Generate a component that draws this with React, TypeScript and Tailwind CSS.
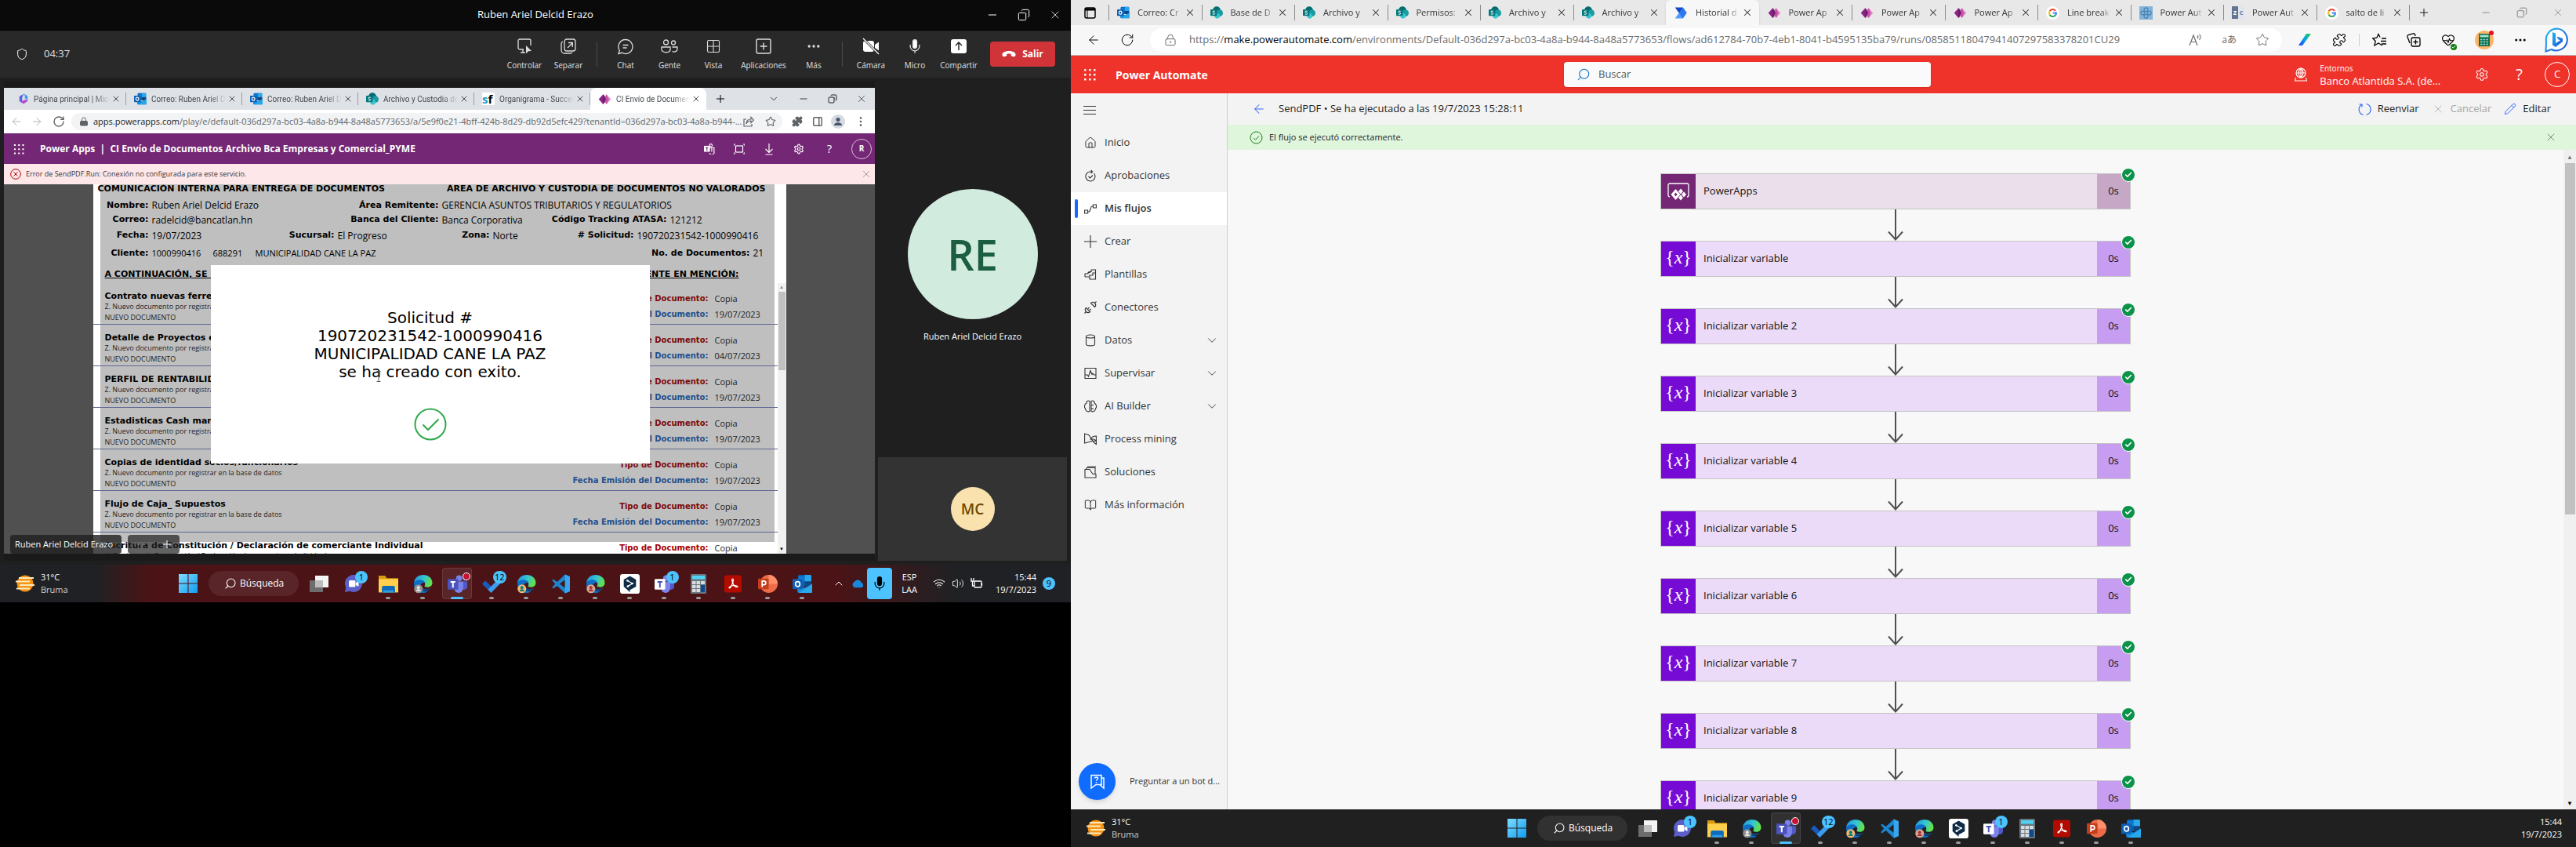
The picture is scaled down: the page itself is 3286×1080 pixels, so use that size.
import React from "react";
import {
  ArrowLeft, ArrowRight, BookOpen, Check, ChevronDown, ChevronUp, Download, Grid2x2, HeartPulse, House,
  LockKeyhole, Lock, Mic, Minus, MoreHorizontal, MoreVertical, PanelRight, Pencil, Plus, Puzzle,
  RotateCw, Search, Settings, Shield, SquarePlus, Star, Volume2, Wifi, X, Copy,
} from "lucide-react";

const ui = "font-['Open_Sans','Noto_Sans',sans-serif]";
const doc = "font-['DejaVu_Sans','Open_Sans',sans-serif]";
const fade = "[mask-image:linear-gradient(to_right,black_78%,transparent)]";

/* ---------- drawn icons ---------- */

function Waffle({ className = "" }: { className?: string }) {
  return (
    <svg className={className} viewBox="0 0 16 16" width="16" height="16" fill="currentColor">
      {[1, 7, 13].map((y) => [1, 7, 13].map((x) => <rect key={`${x}-${y}`} x={x} y={y} width="2.5" height="2.5" rx="0.6" />))}
    </svg>
  );
}

function OutlookIcon({ size = 16 }: { size?: number }) {
  return (
    <svg width={size} height={size} viewBox="0 0 24 24" className="shrink-0">
      <rect x="7" y="1" width="16" height="14" rx="1.5" fill="#0364b8" />
      <path d="M7 2.5h8V9H7z" fill="#0f78d4" />
      <path d="M15 1h6.500a1.500 1.500 0 0 1 1.500 1.500V9h-8z" fill="#28a8ea" />
      <path d="M15 9h8v6h-8z" fill="#14447d" />
      <path d="M6 12l9 5 9-5v9.500a1.500 1.500 0 0 1-1.500 1.500H8a2 2 0 0 1-2-2z" fill="#1490df" />
      <path d="M24 12v9.500a1.500 1.500 0 0 1-1.500 1.500H8z" fill="#28a8ea" />
      <rect x="0" y="6" width="12.500" height="12.500" rx="1.200" fill="#0f5fb4" />
      <ellipse cx="6.250" cy="12.250" rx="2.700" ry="3" fill="none" stroke="#fff" strokeWidth="1.700" />
    </svg>
  );
}

function SharePointIcon() {
  return (
    <svg width="16" height="16" viewBox="0 0 24 24" className="shrink-0">
      <circle cx="12" cy="8" r="7.500" fill="#036c70" />
      <circle cx="17.500" cy="13" r="6.500" fill="#1a9ba1" />
      <circle cx="13" cy="18.500" r="5" fill="#37c6d0" />
      <rect x="0" y="6" width="12.500" height="12.500" rx="1.200" fill="#03787c" />
      <path d="M8.600 9.600c-1.200-.8-4.200-.8-4.200 1 0 2 4.200 1.300 4.200 3.300 0 1.900-3 1.900-4.500.9" fill="none" stroke="#fff" strokeWidth="1.500" />
    </svg>
  );
}

function PowerAppsIcon() {
  return (
    <svg width="17" height="17" viewBox="0 0 24 24" className="shrink-0">
      <path d="M9 3l8 9-8 9-8-9z" fill="#8a2387" />
      <path d="M15 3l8 9-8 9-6-9z" fill="#e08bc6" />
      <path d="M15 3l4 9-4 9-4.500-9z" fill="#c653a8" />
      <path d="M9 3l5 9-5 9z" fill="#6a1a68" />
    </svg>
  );
}

function FlowIcon() {
  return (
    <svg width="17" height="17" viewBox="0 0 24 24" className="shrink-0">
      <path d="M1 2h14l7 10H8z" fill="#1447c9" />
      <path d="M8 12h14l-7 10H1z" fill="#4f9cf9" />
      <path d="M8 12L15 2l7 10-7 10z" fill="#2f78ee" />
    </svg>
  );
}

function GoogleIcon() {
  return (
    <svg width="17" height="17" viewBox="0 0 24 24" className="shrink-0">
      <circle cx="12" cy="12" r="12" fill="#fff" />
      <g fill="none" strokeWidth="3">
        <path d="M17 8.200A6.300 6.300 0 0 0 6.500 8.900" stroke="#ea4335" />
        <path d="M6.500 8.900a6.300 6.300 0 0 0 0 6.200" stroke="#fbbc05" />
        <path d="M6.500 15.100a6.300 6.300 0 0 0 9.900 1.500" stroke="#34a853" />
        <path d="M16.400 16.600a6.300 6.300 0 0 0 1.900-4.600h-6" stroke="#4285f4" />
      </g>
    </svg>
  );
}

function MicrosoftIcon() {
  return (
    <svg width="14" height="16" viewBox="0 0 24 24" className="shrink-0">
      <path d="M13 1L3 7v10l6 4V9z" fill="#5b5fe0" />
      <path d="M13 1l8 5v8l-6-3V6z" fill="#3aa0e8" />
      <path d="M21 14v3l-9 6-6-4 8-5z" fill="#b04fd0" />
    </svg>
  );
}

function SfIcon() {
  return (
    <span className="flex h-4 w-4 shrink-0 items-center bg-white font-['Open_Sans',sans-serif] text-[15px] leading-4 font-bold">
      <span className="text-[#1a9bd7]">s</span>
      <span className="text-black">f</span>
    </span>
  );
}

function RingsIcon() {
  return (
    <svg width="17" height="17" viewBox="0 0 16 16" className="shrink-0">
      <rect width="16" height="16" fill="#86b4d8" />
      <g fill="none" stroke="#4a86b8" strokeWidth="1.200">
        <circle cx="8" cy="4" r="2.300" /><circle cx="8" cy="12" r="2.300" /><circle cx="4" cy="8" r="2.300" /><circle cx="12" cy="8" r="2.300" />
      </g>
    </svg>
  );
}

function ZcIcon() {
  return (
    <span className="flex h-4 w-4 shrink-0 text-[9px] leading-4 font-bold">
      <span className="w-2 bg-[#5f7592] text-center text-white">z</span>
      <span className="w-2 bg-[#dfe6ee] text-center text-[#6d86a5]">c</span>
    </span>
  );
}

const tabIcons = {
  outlook: <OutlookIcon />, sp: <SharePointIcon />, pa: <PowerAppsIcon />, flow: <FlowIcon />, g: <GoogleIcon />,
  ms: <MicrosoftIcon />, sf: <SfIcon />, rings: <RingsIcon />, zc: <ZcIcon />,
};
type TabIcon = keyof typeof tabIcons;

function GlyphX({ className = "h-4 w-4" }: { className?: string }) {
  return <X className={className} strokeWidth={1.2} />;
}

/* ---------- taskbar ---------- */

function Edge({ accent, mark }: { accent: string; mark: string }) {
  return (
    <svg width="25" height="25" viewBox="0 0 24 24">
      <defs>
        <linearGradient id="edgeTop" x1="0" x2="1" y1="0" y2="0.300">
          <stop offset="0" stopColor="#1f8fe0" /><stop offset="0.600" stopColor="#35c8d0" /><stop offset="1" stopColor="#62e04c" />
        </linearGradient>
      </defs>
      <path d="M1 11C1.500 4.500 6.500 1 12 1c7 0 11.500 4.500 11.500 9.500 0 3.500-2.500 5.500-6 5.500-2.500 0-4-.8-3.500-1.700C16 11.500 13.500 8 9.500 8 5 8 1.500 9.500 1 11z" fill="url(#edgeTop)" />
      <path d="M1 11c.5-2.500 4-4 7.500-4 4 0 6 2.500 6 4-3-1.500-6 1-5.500 4.500.5 4 5 6.500 9 5.500C11 26 .5 22 1 11z" fill="#0f6fc8" />
      <path d="M9 15c0 4 4 6.500 8 5.500 2-.5 4-1.800 5-3.500-5 2.500-10 1-13-2z" fill="#0b4a86" />
      <circle cx="6.500" cy="18" r="5.300" fill={accent} />
      <circle cx="6.500" cy="16.500" r="1.900" fill={mark} />
      <path d="M3.500 21c.5-3.500 5.500-3.500 6 0z" fill={mark} />
    </svg>
  );
}

function TeamsIcon({ boxed }: { boxed?: boolean }) {
  return (
    <svg width="25" height="25" viewBox="0 0 24 24">
      <circle cx="14" cy="5" r="3.600" fill="#7b83eb" />
      <circle cx="20.500" cy="6" r="2.300" fill="#5059c9" />
      <path d="M17 9h7v6.500a4 4 0 0 1-6 3z" fill="#5059c9" />
      <path d="M8 9h11v8.500a5.500 5.500 0 0 1-11 0z" fill="#7b83eb" />
      <rect x="0" y="6" width="13" height="13" rx="1.200" fill={boxed ? "#ffffff" : "#4b53bc"} />
      <path d="M3.500 9.500h6M6.500 9.500v7" stroke={boxed ? "#4b53bc" : "#fff"} strokeWidth="1.900" />
    </svg>
  );
}

function Badge({ children }: { children: string }) {
  return (
    <span className="absolute -top-1 -right-1.5 flex h-4 min-w-4 items-center justify-center rounded-full bg-[#4cc2ff] px-0.5 text-[11px] leading-4 text-black">
      {children}
    </span>
  );
}

const apps: { name: string; icon: React.ReactNode; dot?: boolean; active?: boolean }[] = [
  {
    name: "Vista de tareas",
    icon: (
      <svg width="24" height="24" viewBox="0 0 24 24">
        <rect x="7" y="2" width="17" height="15" fill="#f4f4f4" /><rect x="0" y="8" width="17" height="15" fill="#6d6d6d" /><rect x="7" y="8" width="10" height="9" fill="#bdbdbd" />
      </svg>
    ),
  },
  {
    name: "Chat",
    icon: (
      <>
        <svg width="24" height="24" viewBox="0 0 24 24">
          <path d="M12 1a11 11 0 1 1-5 20.800L1 23l1.200-6A11 11 0 0 1 12 1z" fill="#5b5fc7" /><rect x="6" y="8" width="8.500" height="8.500" rx="1.500" fill="#fff" /><path d="M15 11l3.500-2v7L15 14z" fill="#fff" />
        </svg>
        <Badge>1</Badge>
      </>
    ),
  },
  {
    name: "Explorador de archivos",
    dot: true,
    icon: (
      <svg width="25" height="25" viewBox="0 0 24 24">
        <path d="M0 2h8l2 3h14v17H0z" fill="#d89a10" /><path d="M0 6h24v16.500H0z" fill="#ffd04c" /><path d="M4 16.500a2 2 0 0 1 2-2h12a2 2 0 0 1 2 2v6H4z" fill="#0f6cbd" /><path d="M6 20h12v2.500H6z" fill="#2fa1ea" />
      </svg>
    ),
  },
  { name: "Edge", dot: true, icon: <Edge accent="#8f8f8f" mark="#e5e5e5" /> },
  {
    name: "Teams",
    dot: true,
    active: true,
    icon: (
      <>
        <TeamsIcon />
        <span className="absolute -top-0.5 -right-1 h-2.5 w-2.5 rounded-full border border-white bg-[#c4122f]" />
      </>
    ),
  },
  {
    name: "To Do",
    dot: true,
    icon: (
      <>
        <svg width="25" height="25" viewBox="0 0 24 24">
          <path d="M0 12l4-4 7 7-4 4z" fill="#185abd" /><path d="M7 19L21 5l3.500 4L11 23z" fill="#3b9cf0" />
        </svg>
        <Badge>12</Badge>
      </>
    ),
  },
  { name: "Edge Finanzas", dot: true, icon: <Edge accent="#f0b878" mark="#0d7a6a" /> },
  {
    name: "Visual Studio Code",
    dot: true,
    icon: (
      <svg width="25" height="25" viewBox="0 0 24 24">
        <path fillRule="evenodd" d="M17 .5l6 2.500v18l-6 2.500-9.500-9L3 17.500l-2-1L5 12 1 7.500l2-1L7.500 9.500zM17 7l-6.500 5 6.500 5z" fill="#1a86cf" />
        <path d="M17 .5l6 2.500v18l-6 2.500z" fill="#3aa5ee" />
      </svg>
    ),
  },
  { name: "Edge Personal", dot: true, icon: <Edge accent="#d8a888" mark="#a8324a" /> },
  {
    name: "DeepL",
    dot: true,
    icon: (
      <svg width="25" height="25" viewBox="0 0 24 24">
        <rect width="24" height="24" rx="3" fill="#fff" /><path d="M12 2.500l7.500 4.200v8.600L12 19.500v2.500L4.500 15.300V6.700z" fill="#0f2b46" /><path d="M9 8l6 3.500L9.500 15" stroke="#fff" strokeWidth="1.200" fill="none" /><circle cx="9" cy="8" r="1.300" fill="#fff" /><circle cx="15" cy="11.500" r="1.300" fill="#fff" /><circle cx="9.500" cy="15" r="1.300" fill="#fff" />
      </svg>
    ),
  },
  {
    name: "Teams personal",
    dot: true,
    icon: (
      <>
        <TeamsIcon boxed />
        <Badge>1</Badge>
      </>
    ),
  },
  {
    name: "Calculadora",
    dot: true,
    icon: (
      <svg width="20" height="25" viewBox="0 0 20 25">
        <rect width="20" height="25" rx="1.500" fill="#6a7680" /><rect x="2" y="2" width="16" height="4.500" fill="#4fd3f5" />
        {[9, 14, 19].map((y) => [2, 7.5].map((x) => <rect key={`${x}-${y}`} x={x} y={y} width="4.500" height="4" fill="#d9dde0" />))}
        <rect x="13" y="9" width="5" height="4" fill="#d9dde0" /><rect x="13" y="14" width="5" height="9" fill="#0b4a8f" />
      </svg>
    ),
  },
  {
    name: "Acrobat",
    dot: true,
    icon: (
      <svg width="22" height="23" viewBox="0 0 24 24">
        <rect width="24" height="24" rx="3.500" fill="#b30b00" />
        <path d="M11.500 5c-1.500 0-.8 3.500.5 6.500s4 5 5.500 5 1.500-2-2.500-2.300c-3-.2-6 .6-7.500 1.800s-1 2.500.3 1.700C9.500 16.500 12.500 9 12.500 6.500c0-1-.5-1.500-1-1.500z" fill="none" stroke="#fff" strokeWidth="1.400" />
      </svg>
    ),
  },
  {
    name: "PowerPoint",
    dot: true,
    icon: (
      <svg width="25" height="25" viewBox="0 0 24 24">
        <circle cx="13" cy="12" r="11" fill="#ed6c47" /><path d="M13 1a11 11 0 0 1 11 11H13z" fill="#ff8f6b" /><rect x="0" y="5.500" width="13" height="13" rx="1.200" fill="#c43e1c" /><path d="M5 16V8.500h2.200a2.200 2.200 0 0 1 0 4.500H5" fill="none" stroke="#fff" strokeWidth="1.600" />
      </svg>
    ),
  },
  { name: "Outlook", dot: true, icon: <OutlookIcon size={25} /> },
];

function TaskApps() {
  return (
    <div className="flex items-center">
      <button aria-label="Inicio" className="mr-1.5 flex h-10 w-10 items-center justify-center">
        <svg width="24" height="24" viewBox="0 0 23 23">
          <defs><linearGradient id="win" x1="0" y1="0" x2="1" y2="1"><stop offset="0" stopColor="#7fdcff" /><stop offset="1" stopColor="#0f9bf0" /></linearGradient></defs>
          <path d="M0 0h11v11H0zM12 0h11v11H12zM0 12h11v11H0zM12 12h11v11H12z" fill="url(#win)" />
        </svg>
      </button>
      <button className="mr-1 flex h-8 w-[115px] items-center gap-1 rounded-full bg-white/8 pl-5 text-[12px] text-white">
        <Search className="h-4 w-4 -scale-x-100" strokeWidth={1.6} />
        Búsqueda
      </button>
      {apps.map((a) => (
        <button key={a.name} aria-label={a.name} className="relative flex h-10 w-11 items-center justify-center">
          <span className={`relative flex h-10 w-[38px] items-center justify-center ${a.active ? "rounded border border-white/10 bg-white/8" : ""}`}>
            <span className="relative">{a.icon}</span>
          </span>
          {a.dot && <span className={`absolute bottom-0 h-[3px] rounded-full ${a.active ? "w-4 bg-[#4cc2ff]" : "w-1.5 bg-[#9b9b9b]"}`} />}
        </button>
      ))}
    </div>
  );
}

function Weather() {
  return (
    <div className="flex w-[200px] items-center gap-2 pl-5 text-[11px] leading-4 text-white">
      <svg width="24" height="24" viewBox="0 0 24 24">
        <circle cx="12" cy="12" r="10.500" fill="#f59410" />
        <path d="M4 5h19M0 9.500h18M5 14h19M1 18.500h17" stroke="#fde9c0" strokeWidth="1.800" />
      </svg>
      <div>
        <div>31°C</div>
        <div className="text-[#cfcfcf]">Bruma</div>
      </div>
    </div>
  );
}

/* ---------- Teams window ---------- */

function MeetButton({ icon, label, w }: { icon: React.ReactNode; label: string; w: string }) {
  return (
    <button className={`flex flex-col items-center gap-1 text-[10px] leading-4 text-[#e0e0e0] ${w}`}>
      <span className="flex h-6 items-center">{icon}</span>
      {label}
    </button>
  );
}

function TeamsWindowBar() {
  return (
    <>
      <header className="grid h-[39px] grid-cols-3 items-center border-b border-black bg-[#0a0a0a] text-[13px] text-white">
        <span />
        <h1 className="text-center">Ruben Ariel Delcid Erazo</h1>
        <div className="flex justify-end gap-6 pr-3">
          <button aria-label="Minimizar"><Minus className="h-4 w-4" strokeWidth={1.5} /></button>
          <button aria-label="Restaurar"><Copy className="h-4 w-4 rotate-90" strokeWidth={1.5} /></button>
          <button aria-label="Cerrar"><GlyphX /></button>
        </div>
      </header>
      <div className="flex h-[60px] items-center bg-[#292929] text-white">
        <Shield className="mr-5 ml-5 h-4 w-4" strokeWidth={1.5} />
        <span className="text-[13px] text-[#e0e0e0]">04:37</span>
        <div className="ml-auto flex items-center pr-5">
          <MeetButton w="w-14" label="Controlar" icon={
            <svg width="20" height="22" viewBox="0 0 20 22" fill="none" stroke="#ddd" strokeWidth="1.300"><path d="M9 15H4a2 2 0 0 1-2-2V4a2 2 0 0 1 2-2h12a2 2 0 0 1 2 2v6M5 19h6M8 15v4" /><path d="M12 10l7 7-4 .3-3 3z" fill="#ddd" stroke="none" /></svg>
          } />
          <MeetButton w="w-14" label="Separar" icon={
            <svg width="20" height="20" viewBox="0 0 20 20" fill="none" stroke="#ddd" strokeWidth="1.300"><rect x="5" y="1" width="14" height="15" rx="3" /><path d="M3 4a3 3 0 0 0-2 3v8a4 4 0 0 0 4 4h7a3 3 0 0 0 3-1.500M9 12l6-6M10 5.500h5.300V11" /></svg>
          } />
          <span className="mx-2 h-8 w-px bg-[#4a4a4a]" />
          <MeetButton w="w-14" label="Chat" icon={
            <svg width="20" height="21" viewBox="0 0 20 21" fill="none" stroke="#ddd" strokeWidth="1.300"><path d="M10 1.500a9 9 0 1 1-4.500 16.800L1 19.500l1.300-4.200A9 9 0 0 1 10 1.500zM6.500 8.500h7M6.500 12h5" /></svg>
          } />
          <MeetButton w="w-14" label="Gente" icon={
            <svg width="22" height="18" viewBox="0 0 22 18" fill="none" stroke="#ddd" strokeWidth="1.300"><circle cx="6.500" cy="4" r="3" /><circle cx="16" cy="4.500" r="2.500" /><path d="M1 10h11v3c0 5-11 5-11 0zM14.500 10H21v2.500c0 3-3.500 4.300-6.500 3" /></svg>
          } />
          <MeetButton w="w-14" label="Vista" icon={<Grid2x2 className="h-5 w-5 text-[#ddd]" strokeWidth={1.3} />} />
          <MeetButton w="w-[72px]" label="Aplicaciones" icon={<SquarePlus className="h-6 w-6 text-[#ddd]" strokeWidth={1.4} />} />
          <MeetButton w="w-14" label="Más" icon={<MoreHorizontal className="h-5 w-5" />} />
          <span className="mx-2 h-8 w-px bg-[#4a4a4a]" />
          <MeetButton w="w-14" label="Cámara" icon={
            <svg width="22" height="22" viewBox="0 0 22 22"><rect x="1" y="4" width="14" height="14" rx="3" fill="#fff" /><path d="M16 9l5-3.500v11L16 13z" fill="#fff" /><path d="M1 1l20 20" stroke="#292929" strokeWidth="3" /><path d="M1 1l20 20" stroke="#fff" strokeWidth="1.300" /></svg>
          } />
          <MeetButton w="w-14" label="Micro" icon={<Mic className="h-5 w-5 [&_rect]:fill-white" strokeWidth={1.5} />} />
          <MeetButton w="w-14" label="Compartir" icon={
            <svg width="20" height="18" viewBox="0 0 20 18"><rect width="20" height="18" rx="3" fill="#fff" /><path d="M10 14V4M6 8l4-4 4 4" stroke="#292929" strokeWidth="1.500" fill="none" /></svg>
          } />
          <button className="ml-3 flex h-8 w-[83px] items-center justify-center gap-2 rounded bg-[#d13438] text-[12px] font-bold text-white">
            <svg width="18" height="8" viewBox="0 0 18 8" fill="#fff"><path d="M9 0c4 0 8.500 1.500 8.500 4.500 0 2-1 3-2.500 2.800l-2-.5c-1-.3-1.500-1-1.300-2.800-1.700-.6-3.700-.6-5.400 0 .2 1.800-.3 2.500-1.300 2.800l-2 .5C1.500 7.500.5 6.500.5 4.500.5 1.500 5 0 9 0z" /></svg>
            Salir
          </button>
        </div>
      </div>
    </>
  );
}

function ChromeTab({ icon, title, active }: { icon: TabIcon; title: string; active?: boolean }) {
  return (
    <div className={`flex h-7 w-[148px] items-center pl-2.5 font-['Roboto','Open_Sans',sans-serif] text-[10px] text-[#45494d] ${active ? "rounded-t-lg bg-white" : ""}`}>
      {tabIcons[icon]}
      <span className={`ml-1.5 flex-1 overflow-hidden whitespace-nowrap ${fade}`}>{title}</span>
      <button aria-label={`Cerrar ${title}`} className="ml-0.5"><X className="h-3 w-3" /></button>
      <span className={`ml-1.5 h-4 w-px ${active ? "" : "bg-[#9aa0a6]"}`} />
    </div>
  );
}

function ChromeBar() {
  return (
    <>
      <div className="flex h-7 items-center bg-[#dee1e6] pl-2">
        <ChromeTab icon="ms" title="Página principal | Micr" />
        <ChromeTab icon="outlook" title="Correo: Ruben Ariel D" />
        <ChromeTab icon="outlook" title="Correo: Ruben Ariel D" />
        <ChromeTab icon="sp" title="Archivo y Custodia de" />
        <ChromeTab icon="sf" title="Organigrama - Succes" />
        <ChromeTab icon="pa" title="CI Envío de Document" active />
        <button aria-label="Nueva pestaña" className="ml-2.5"><Plus className="h-4 w-4" strokeWidth={1.5} /></button>
        <div className="ml-auto flex items-center gap-6 pr-2.5 text-[#222]">
          <ChevronDown className="h-3.5 w-3.5" strokeWidth={1.5} />
          <Minus className="h-3.5 w-3.5" strokeWidth={1.5} />
          <Copy className="h-3 w-3 rotate-90" strokeWidth={2} />
          <GlyphX className="h-3.5 w-3.5" />
        </div>
      </div>
      <div className="flex h-[30px] items-center bg-white pr-2.5 pl-2 text-[#5f6368]">
        <ArrowLeft className="h-4 w-4 text-[#b0b3b6]" strokeWidth={1.5} />
        <ArrowRight className="ml-2.5 h-4 w-4 text-[#b0b3b6]" strokeWidth={1.5} />
        <RotateCw className="ml-3 h-4 w-4" />
        <div className="ml-2 flex h-[22px] min-w-0 flex-1 items-center rounded-full bg-[#f1f3f4] pr-2 pl-2.5">
          <Lock className="h-3 w-3 [&_rect]:fill-[#5f6368]" />
          <span className="ml-1.5 min-w-0 flex-1 overflow-hidden text-[11px] whitespace-nowrap">
            <span className="text-[#202124]">apps.powerapps.com</span>/play/e/default-036d297a-bc03-4a8a-b944-8a48a5773653/a/5e9f0e21-4bff-424b-8d29-db92d5efc429?tenantId=036d297a-bc03-4a8a-b944-...
          </span>
          <svg className="mr-3.5" width="14" height="14" viewBox="0 0 14 14" fill="none" stroke="#5f6368" strokeWidth="1.200"><path d="M4 4H1v9h10v-3M4 10c0-4 2-6 6-6V1.500L13.500 5 10 8.500V6C7 6 5 7.500 4 10z" /></svg>
          <Star className="h-3.5 w-3.5" strokeWidth={1.8} />
        </div>
        <Puzzle className="ml-3 h-3.5 w-3.5 fill-[#5f6368]" />
        <PanelRight className="ml-3 h-3.5 w-3.5" strokeWidth={2.5} />
        <span className="ml-2.5 flex h-[18px] w-[18px] items-center justify-center overflow-hidden rounded-full bg-[#d5d9e0]">
          <svg width="12" height="12" viewBox="0 0 12 12" fill="#44546a"><circle cx="6" cy="3.500" r="2.500" /><path d="M1 11c0-5 10-5 10 0z" /></svg>
        </span>
        <MoreVertical className="ml-3 h-4 w-4" />
      </div>
    </>
  );
}

function PowerAppsBar() {
  return (
    <>
      <div className="flex h-[39px] items-center bg-[#742774] pl-3 text-white">
        <Waffle className="h-3.5 w-3.5" />
        <span className="ml-5 text-[12px] font-bold">Power Apps&nbsp; |&nbsp; CI Envío de Documentos Archivo Bca Empresas y Comercial_PYME</span>
        <div className="ml-auto flex items-center gap-6 pr-1">
          <svg width="14" height="14" viewBox="0 0 24 24" fill="none" stroke="#fff" strokeWidth="2"><circle cx="15" cy="4" r="3" /><path d="M12 9h10v8a5 5 0 0 1-10 4M17 9v9" /><rect x="0" y="5" width="13" height="13" fill="#fff" stroke="none" /><path d="M3.500 9h6M6.500 9v7" stroke="#742774" /></svg>
          <svg width="14" height="14" viewBox="0 0 14 14" fill="none" stroke="#fff" strokeWidth="1.200"><rect x="2.500" y="3" width="9" height="8" /><path d="M0 3V1h2M12 1h2v2M14 11v2h-2M2 13H0v-2" /></svg>
          <svg width="14" height="16" viewBox="0 0 14 16" fill="none" stroke="#fff" strokeWidth="1.200"><path d="M7 1v11M2.500 8L7 12.500 11.500 8M2.500 15h9" /></svg>
          <Settings className="h-3.5 w-3.5" strokeWidth={2} />
          <span className="w-4 text-center text-[15px]">?</span>
          <span className="-ml-1 flex h-[26px] w-[26px] items-center justify-center rounded-full border border-white/70 text-[10px] font-bold">R</span>
        </div>
      </div>
      <div role="alert" className="flex h-[26px] items-center bg-[#fde7e9] pr-1 pl-2 text-[#3a3536]">
        <svg width="14" height="14" viewBox="0 0 14 14" fill="none" stroke="#a80000"><circle cx="7" cy="7" r="6.300" /><path d="M4.500 4.500l5 5M9.500 4.500l-5 5" /></svg>
        <span className="ml-1.5 text-[9px]">Error de SendPDF.Run: Conexión no configurada para este servicio.</span>
        <button aria-label="Cerrar aviso" className="ml-auto text-[#777]"><GlyphX className="h-3.5 w-3.5" /></button>
      </div>
    </>
  );
}

function Label({ children }: { children: string }) {
  return <dt className={`text-right text-[11px] font-bold whitespace-nowrap ${doc}`}>{children}</dt>;
}
function Value({ children, small }: { children: string; small?: boolean }) {
  return <dd className={`pl-1 whitespace-nowrap ${small ? "text-[11px]" : "text-[12px]"}`}>{children}</dd>;
}

const items = [
  ["Contrato nuevas ferreterias", "19/07/2023"],
  ["Detalle de Proyectos en ejecución", "04/07/2023"],
  ["PERFIL DE RENTABILIDAD", "19/07/2023"],
  ["Estadisticas Cash management", "19/07/2023"],
  ["Copias de identidad socios/funcionarios", "19/07/2023"],
  ["Flujo de Caja_ Supuestos", "19/07/2023"],
];

function ItemRow({ title, sub, date, last }: { title: string; sub: string; date: string; last?: boolean }) {
  return (
    <li className={`flex h-[53px] justify-between pl-[15px] ${last ? "" : "border-b border-[#5f6794]"}`}>
      <div className="pt-2.5 text-[9px] leading-3 text-[#222]">
        <div className={`text-[11px] leading-[14px] font-bold text-black ${doc}`}>{title}</div>
        <div>{sub}</div>
        <div className="mt-0.5">NUEVO DOCUMENTO</div>
      </div>
      <dl className="grid h-[53px] grid-cols-[1fr_88px] content-start gap-y-1 pt-3 leading-4">
        <dt className={`text-right text-[10px] font-bold ${doc} ${last ? "text-[#a80000]" : "text-[#7d0a0a]"}`}>Tipo de Documento:</dt>
        <dd className="pl-2 text-[11px] text-[#222]">Copia</dd>
        <dt className={`text-right text-[10px] font-bold text-[#22508c] ${doc}`}>Fecha Emisión del Documento:</dt>
        <dd className="pl-2 text-[11px] text-[#222]">{date}</dd>
      </dl>
    </li>
  );
}

function DocumentPage() {
  return (
    <div className="relative flex h-[471px] justify-center overflow-hidden bg-[#505050] text-black">
      <article className="relative w-[884px] bg-white">
        <div className="absolute top-0 right-[15px] left-[9px] h-[456px] bg-[#bfbfbf]" />
        <div className="relative">
          <div className={`flex h-[18px] justify-between pr-[26px] pl-1.5 text-[11px] leading-3 font-bold whitespace-nowrap ${doc}`}>
            <h2>COMUNICACIÓN INTERNA PARA ENTREGA DE DOCUMENTOS</h2>
            <h2>ÁREA DE ARCHIVO Y CUSTODIA DE DOCUMENTOS NO VALORADOS</h2>
          </div>
          <dl className="grid h-[18px] grid-cols-[71px_242px_128px_1fr] items-center">
            <Label>Nombre:</Label><Value>Ruben Ariel Delcid Erazo</Value>
            <Label>Área Remitente:</Label><Value>GERENCIA ASUNTOS TRIBUTARIOS Y REGULATORIOS</Value>
          </dl>
          <dl className="grid h-[19px] grid-cols-[71px_242px_128px_126px_165px_1fr] items-center">
            <Label>Correo:</Label><Value>radelcid@bancatlan.hn</Value>
            <Label>Banca del Cliente:</Label><Value>Banca Corporativa</Value>
            <Label>Código Tracking ATASA:</Label><Value>121212</Value>
          </dl>
          <dl className="grid h-[21px] grid-cols-[71px_165px_72px_148px_50px_90px_94px_1fr] items-center">
            <Label>Fecha:</Label><Value>19/07/2023</Value>
            <Label>Sucursal:</Label><Value>El Progreso</Value>
            <Label>Zona:</Label><Value>Norte</Value>
            <Label># Solicitud:</Label><Value>190720231542-1000990416</Value>
          </dl>
          <dl className="grid h-6 grid-cols-[71px_78px_54px_489px_146px_1fr] items-center">
            <Label>Cliente:</Label><Value small>1000990416</Value>
            <Value small>688291</Value><Value small>MUNICIPALIDAD CANE LA PAZ</Value>
            <Label>No. de Documentos:</Label><Value>21</Value>
          </dl>
          <div className={`flex h-[26px] items-center justify-between pt-1 pr-[60px] pl-[15px] text-[11px] font-bold underline ${doc}`}>
            <span>A CONTINUACIÓN, SE DETALLAN</span>
            <span>CORRESPONDIENTE EN MENCIÓN:</span>
          </div>
          <div className="flex">
            <ul className="min-w-0 flex-1">
              {items.map(([t, d]) => (
                <ItemRow key={t} title={t} sub="Z. Nuevo documento por registrar en la base de datos" date={d} />
              ))}
              <ItemRow title="Escritura de Constitución / Declaración de comerciante Individual" sub="A. Escritura de Constitución / Declaración de comerciante Individual" date="19/07/2023" last />
            </ul>
            <div className="flex h-[345px] w-[11px] flex-col items-center justify-between bg-[#f1f1f1] text-[6px]">
              <span className="flex flex-col items-center leading-[11px] text-[#888]">▲<span className="h-[100px] w-[9px] bg-[#c1c1c1]" /></span>
              <span className="leading-3">▼</span>
            </div>
          </div>
        </div>
      </article>
      <div role="dialog" aria-label="Solicitud creada" className="absolute top-[103px] left-1/2 -ml-3 flex h-[253px] w-[560px] -translate-x-1/2 flex-col items-center bg-white pt-14">
        <p className={`text-center text-[20px] leading-[23px] ${doc}`}>
          Solicitud #<br />190720231542-1000990416<br />MUNICIPALIDAD CANE LA PAZ<br />se ha creado con exito.
        </p>
        <svg className="mt-[34px]" width="42" height="42" viewBox="0 0 42 42" fill="none" stroke="#2fa84a" strokeWidth="2"><circle cx="21" cy="21" r="19.500" /><path d="M11.500 21.500l6.500 6.500L31.500 14.500" /></svg>
      </div>
      <svg className="absolute top-[238px] left-[474px]" width="8" height="14" viewBox="0 0 8 14" fill="none" stroke="#555"><path d="M1.500.5h5M4 .5v13M1.500 13.500h5" /></svg>
      <div className="absolute bottom-0 left-2 flex h-6 gap-2 text-white">
        <span className="flex w-[142px] items-center rounded bg-[#1f1f1f]/80 pl-1.5 text-[11px] whitespace-nowrap">Ruben Ariel Delcid Erazo</span>
        <span className="flex w-[66px] items-center justify-around rounded bg-[#1f1f1f]/70">
          <Minus className="h-4 w-4 text-[#888]" strokeWidth={1.5} /><Plus className="h-4 w-4" strokeWidth={1.5} />
        </span>
      </div>
    </div>
  );
}

function LeftScreen() {
  return (
    <section className="min-w-0 bg-black">
      <TeamsWindowBar />
      <main className="flex h-[621px] bg-[#1f1f1f] p-[5px]">
        <div className="flex min-w-0 flex-1 flex-col bg-[#1a1a1a] pt-2">
          <ChromeBar />
          <PowerAppsBar />
          <DocumentPage />
        </div>
        <aside className="flex w-[245px] flex-col pl-1">
          <div className="flex flex-1 flex-col items-center pt-[137px]">
            <div className="flex h-[166px] w-[166px] items-center justify-center rounded-full bg-[#d1ebdf] text-[54px] font-semibold text-[#1c5e40]">RE</div>
            <div className="mt-3.5 text-[11px] text-white">Ruben Ariel Delcid Erazo</div>
          </div>
          <div className="flex h-[132px] items-center justify-center bg-[#333333]">
            <div className="flex h-14 w-14 items-center justify-center rounded-full bg-[#f9e2ae] text-[19px] font-semibold text-[#6d4a06]">MC</div>
          </div>
        </aside>
      </main>
      <footer className="flex h-12 items-center bg-[linear-gradient(to_right,#202124_9%,#4c1316_14%,#4c1316_78%,#202124_89%)]">
        <div className="w-[220px]"><Weather /></div>
        <TaskApps />
        <div className="ml-auto flex items-center pr-5 text-white">
          <ChevronUp className="h-4 w-4" strokeWidth={1.5} />
          <svg className="ml-2 h-3.5 w-4" viewBox="0 0 18 14" fill="#1a86dd"><path d="M5 13a4.500 4.500 0 0 1-.5-8.500A5.500 5.500 0 0 1 14.500 6 3.600 3.600 0 0 1 14 13z" /></svg>
          <span className="ml-1 flex h-10 w-8 items-center justify-center rounded bg-[#4cc2ff] text-black"><Mic className="h-5 w-5 [&_rect]:fill-black" strokeWidth={1.5} /></span>
          <span className="ml-3 text-center text-[11px] leading-4">ESP<br />LAA</span>
          <Wifi className="ml-5 h-4 w-4" strokeWidth={1.6} />
          <Volume2 className="ml-2 h-4 w-4" strokeWidth={1.3} />
          <svg className="ml-2 h-4 w-4" viewBox="0 0 16 16" fill="none" stroke="#fff" strokeWidth="1.300"><rect x="5" y="5" width="9" height="8" rx="1" /><path d="M14.500 7.500v3M1 1v4h3V1M2.500 5v6H5" /></svg>
          <span className="ml-4 text-right text-[11px] leading-4">15:44<br />19/7/2023</span>
          <span className="ml-2 flex h-4 w-4 items-center justify-center rounded-full bg-[#4cc2ff] text-[11px] text-black">9</span>
        </div>
      </footer>
    </section>
  );
}

/* ---------- Power Automate window ---------- */

const edgeTabs: { icon: TabIcon; title: string; active?: boolean }[] = [
  { icon: "outlook", title: "Correo: Cr" }, { icon: "sp", title: "Base de D" }, { icon: "sp", title: "Archivo y" },
  { icon: "sp", title: "Permisos:" }, { icon: "sp", title: "Archivo y" }, { icon: "sp", title: "Archivo y" },
  { icon: "flow", title: "Historial d", active: true }, { icon: "pa", title: "Power Ap" }, { icon: "pa", title: "Power Ap" },
  { icon: "pa", title: "Power Ap" }, { icon: "g", title: "Line break" }, { icon: "rings", title: "Power Aut" },
  { icon: "zc", title: "Power Aut" }, { icon: "g", title: "salto de li" },
];

function EdgeBrowserBar() {
  return (
    <>
      <div className="flex h-8 items-center bg-[#e8e8e8]">
        <div className="flex w-12 justify-center"><svg width="15" height="15" viewBox="0 0 15 15" fill="none" stroke="#000"><rect x="1" y="1" width="13" height="13" rx="2" strokeWidth="1.500" /><path d="M1 3h13" strokeWidth="3" /><path d="M4 4v10" /></svg></div>
        <div className="grid h-full min-w-0 flex-1 grid-cols-14">
          {edgeTabs.map((t, i) => (
            <div key={i} className={`flex min-w-0 items-center ${t.active ? "rounded-t-md bg-[#f7f7f7] shadow" : ""}`}>
              <span className={`h-5 w-px ${t.active || i === 7 ? "" : "bg-[#8a8a8a]"}`} />
              <div className="flex min-w-0 flex-1 items-center pr-2 pl-2.5 text-[11px] text-[#333]">
                {tabIcons[t.icon]}
                <span className={`ml-2.5 min-w-0 flex-1 overflow-hidden whitespace-nowrap ${fade}`}>{t.title}</span>
                <button aria-label={`Cerrar ${t.title}`} className="ml-1"><X className="h-3.5 w-3.5" strokeWidth={1.8} /></button>
              </div>
            </div>
          ))}
        </div>
        <div className="flex w-[213px] items-center pr-4 text-[#777]">
          <span className="mr-2.5 h-5 w-px bg-[#8a8a8a]" />
          <Plus className="h-4 w-4 text-black" strokeWidth={1.3} />
          <Minus className="ml-auto h-3.5 w-3.5" strokeWidth={1.5} />
          <Copy className="ml-8 h-3.5 w-3.5 rotate-90" strokeWidth={1.5} />
          <GlyphX className="ml-8 h-3.5 w-3.5" />
        </div>
      </div>
      <div className="flex h-[39px] items-center border-b border-[#b8b8b8] bg-[#f7f7f7] pl-5 text-black">
        <ArrowLeft className="h-[18px] w-[18px]" strokeWidth={1.3} />
        <RotateCw className="ml-[25px] h-[18px] w-[18px]" strokeWidth={1.3} />
        <div className="ml-5 flex h-[30px] min-w-0 flex-1 items-center rounded-full bg-white pr-4 pl-[18px] text-[#6b6b6b]">
          <LockKeyhole className="h-4 w-4" strokeWidth={1.5} />
          <span className="ml-4 min-w-0 flex-1 truncate text-[13px]">
            https://<span className="text-black">make.powerautomate.com</span>/environments/Default-036d297a-bc03-4a8a-b944-8a48a5773653/flows/ad612784-70b7-4eb1-8041-b4595135ba79/runs/08585118047941407297583378201CU29
          </span>
          <svg width="18" height="16" viewBox="0 0 18 16" fill="none" stroke="#6b6b6b" strokeWidth="1.200"><path d="M1 15L6 2l5 13M2.700 10.500h6.600M11 2.500c1 1 1 2.500 0 3.500M13.500 .8c2 2 2 5 0 7" /></svg>
          <span className="ml-6 font-['Open_Sans','Noto_Sans_CJK_JP',sans-serif] text-[12px] whitespace-nowrap">aあ</span>
          <Star className="ml-6 h-[18px] w-[18px]" strokeWidth={1.3} />
        </div>
        <div className="ml-5 flex items-center gap-[26px]">
          <svg width="18" height="18" viewBox="0 0 18 18"><defs><linearGradient id="pen" x1="0" y1="1" x2="1" y2="0"><stop offset="0" stopColor="#2b3cf0" /><stop offset="0.500" stopColor="#00a2ed" /><stop offset="1" stopColor="#21d03a" /></linearGradient></defs><path d="M1 16L11 1h6L6 16z" fill="url(#pen)" /></svg>
          <Puzzle className="h-[18px] w-[18px]" strokeWidth={1.5} />
        </div>
        <span className="mx-4 h-4 w-px bg-[#cfcfcf]" />
        <div className="flex items-center gap-[26px] pr-2.5">
          <svg width="18" height="18" viewBox="0 0 18 18" fill="none" stroke="#000" strokeWidth="1.300"><path d="M13 16l-5-3-5 3 1.200-5.500L.8 6.800l5-.6L8 1.500l2 4M12 7h6M11 10.500h7M12 14h6" /></svg>
          <svg width="18" height="18" viewBox="0 0 18 18" fill="none" stroke="#000" strokeWidth="1.300"><rect x="6" y="6" width="11" height="11" rx="2" /><path d="M11.500 8.500v6M8.500 11.500h6M4 13L1 5c-.5-1.500 0-2 1-2.500l6-1.700c1.500-.5 2 0 2.500 1L11 4" /></svg>
          <span className="relative">
            <HeartPulse className="h-[18px] w-[18px]" strokeWidth={1.5} />
            <span className="absolute -right-0.5 -bottom-1 flex h-2 w-2 items-center justify-center rounded-full bg-[#107c10] text-white"><Check className="h-1.5 w-1.5" strokeWidth={4} /></span>
          </span>
          <span className="relative -mx-px flex h-6 w-6 items-center justify-center rounded-full bg-[#fdb467]">
            <svg width="14" height="16" viewBox="0 0 14 16"><rect width="14" height="16" fill="#0d6b52" /><rect x="1.500" y="1.500" width="11" height="3" fill="#9fe0c8" /><path d="M2 7.500h10M2 10.500h10M2 13.500h10" stroke="#9fe0c8" strokeWidth="1.500" strokeDasharray="2.500 1.200" /></svg>
            <span className="absolute top-0 right-0 h-1.5 w-1.5 rounded-full bg-[#e81123]" />
          </span>
          <MoreHorizontal className="h-[18px] w-[18px]" />
          <svg className="-ml-1" width="30" height="36" viewBox="0 0 30 36"><defs><linearGradient id="bing" x1="0" y1="0" x2="1" y2="1"><stop offset="0" stopColor="#1fb6f2" /><stop offset="1" stopColor="#1b4fd8" /></linearGradient></defs><path d="M15 3.500a14 14 0 1 1-6.500 26.500L1.500 32.500 2 20A14 14 0 0 1 15 3.500z" fill="#fff" stroke="url(#bing)" strokeWidth="2" /><path d="M10 8l4 1.500V22l6-3.500-3-1.500-1.500-3.500 7.500 2.500v4L14 27l-4-2.500z" fill="url(#bing)" /></svg>
        </div>
      </div>
    </>
  );
}

const s = { width: 16, height: 16, viewBox: "0 0 16 16", fill: "none", stroke: "#333", strokeWidth: 1.1 } as const;
const nav: { label: string; icon: React.ReactNode; more?: boolean; active?: boolean }[] = [
  { label: "Inicio", icon: <House className="h-4 w-4" strokeWidth={1.5} /> },
  { label: "Aprobaciones", icon: <svg {...s}><path d="M12.500 5A6 6 0 1 1 7 3h3M8.500 .8L10.700 3 8.500 5.200M5.500 9l2 2 3.500-3.500" /></svg> },
  { label: "Mis flujos", active: true, icon: <svg {...s}><path d="M.6 10h4v4h-4zM11.400 3h4v4h-4zM4.600 12H6c2 0 2-7 4-7h1.400" /></svg> },
  { label: "Crear", icon: <svg {...s}><path d="M8 0v16M0 8h16" /></svg> },
  { label: "Plantillas", icon: <svg {...s}><path d="M6 5.500V4.500h3V2h5.500v12H7v-3M1 11V7h4V5.500h3M1 11h6V9h4V6h3.500" /></svg> },
  { label: "Conectores", icon: <svg {...s}><path d="M.5 15.500l2-2M2.500 8.500l5 5c-1.500 1.500-3.500 1.500-5 0s-1.500-3.500 0-5zM8.500 2.500l5 5c1.500-1.500 1.500-3.500 0-5s-3.500-1.500-5 0zM13.500 2.500l2-2M5 9.500L6.500 8M7 11.500l1.500-1.500" /></svg> },
  { label: "Datos", more: true, icon: <svg {...s}><ellipse cx="8" cy="3" rx="5.500" ry="2" /><path d="M2.500 3v10c0 2.500 11 2.500 11 0V3" /></svg> },
  { label: "Supervisar", more: true, icon: <svg {...s}><path d="M1 1.500h14v13H1zM1 10h3l1.500 2L8 4.500l2 5 1-1.500 1.500 2H15" /></svg> },
  { label: "AI Builder", more: true, icon: <svg {...s}><path d="M7 1.500C4.500 0 2.500 2 3 4 .500 5-.5 9 1.500 11c0 3 3 4.500 5.500 3.500zM9 1.500c2.500-1.500 4.500.5 4 2.500 2.500 1 3.500 5 1.500 7 0 3-3 4.500-5.500 3.500zM9 6.500h3M9 10.500l3 1" /></svg> },
  { label: "Process mining", icon: <svg {...s}><path d="M.6 1l5 1.500c3 2 3 8 9.800 12V10C8 10 5 12 .6 13zM15.400 4C11 4 9 6 8 8c2-.5 5 0 7.400 2z" /></svg> },
  { label: "Soluciones", icon: <svg {...s}><path d="M1 4.500h6l4 6h4V15H1zM3 4.500V2.500h11v8M4 1h11" /></svg> },
  { label: "Más información", icon: <BookOpen className="h-4 w-4" strokeWidth={1.5} /> },
];

function Sidebar() {
  return (
    <nav className="flex w-[200px] shrink-0 flex-col border-r border-[#cfcfcf] bg-[#f3f3f3] text-[13px] text-[#333]">
      <button aria-label="Menú" className="flex h-[42px] items-center pl-4">
        <svg width="16" height="12" viewBox="0 0 16 12" stroke="#333"><path d="M0 1.500h16M0 6.500h16M0 11.500h16" /></svg>
      </button>
      {nav.map((n) => (
        <a key={n.label} href={`#${n.label}`} className={`flex h-[42px] items-center pr-2.5 ${n.active ? "bg-white font-semibold" : ""}`}>
          <span className={`ml-[5px] h-6 w-1 rounded ${n.active ? "bg-[#0f6cff]" : ""}`} />
          <span className="ml-2 flex w-4 justify-center">{n.icon}</span>
          <span className="ml-2.5">{n.label}</span>
          {n.more && <ChevronDown className="ml-auto h-[18px] w-[18px]" strokeWidth={1.2} />}
        </a>
      ))}
      <button className="mt-auto mb-3 flex items-center gap-[18px] pl-2.5 text-[11px] whitespace-nowrap">
        <span className="flex h-[47px] w-[47px] shrink-0 items-center justify-center rounded-full bg-[#0f6cff] shadow-md">
          <svg width="20" height="20" viewBox="0 0 20 20" fill="none" stroke="#fff" strokeWidth="1.500"><path d="M2 1.500h13v12H8L2 18zM15 5h3v13l-5-4.500" /><path d="M6.500 5.500c0-2 4-2 4 0 0 1.500-2 1.500-2 3M8.500 10v1.200" /></svg>
        </span>
        Preguntar a un bot d...
      </button>
    </nav>
  );
}

function StepCard({ title, trigger }: { title: string; trigger?: boolean }) {
  return (
    <div className={`relative flex h-[46px] w-[600px] items-stretch border border-[#c4c4c4] text-[13px] text-[#111] ${trigger ? "bg-[#ebdfeb]" : "bg-[#ebdbf8]"}`}>
      <span className={`flex w-11 items-center justify-center text-white ${trigger ? "bg-[#742774]" : "bg-[#770bd6]"}`}>
        {trigger ? (
          <svg width="28" height="24" viewBox="0 0 28 24"><path d="M3 19a2 2 0 0 1-2-2V4a2 2 0 0 1 2-2h22a2 2 0 0 1 2 2v13a2 2 0 0 1-2 2" fill="none" stroke="#fff" strokeWidth="1.300" /><path d="M10.500 9l6 7-6 7-6-7z" fill="#fff" /><path d="M10.500 13.500l2 2.500-2 2.500-2-2.500z" fill="#742774" /><path d="M17 8.500l3 3.500-3 3.500-3-3.500zM21 12.500l3 3.500-3 3.500-3-3.500zM17 16.500l3 3.500-3 3.500-3-3.500z" fill="#fff" /></svg>
        ) : (
          <span className="pb-1 font-['Liberation_Serif',serif] text-[24px] leading-6 whitespace-nowrap">{"{"}<i>x</i>{"}"}</span>
        )}
      </span>
      <span className="flex flex-1 items-center pl-2.5">{title}</span>
      <span className={`flex w-[42px] items-center justify-center ${trigger ? "bg-[#c7a7c6]" : "bg-[#c69df0]"}`}>0s</span>
      <span className="absolute -top-[7px] -right-1.5 flex h-4 w-4 items-center justify-center rounded-full bg-[#0b934a] text-white ring-1 ring-white"><Check className="h-2.5 w-2.5" strokeWidth={4} /></span>
    </div>
  );
}

function FlowCanvas() {
  const steps = ["PowerApps", "Inicializar variable", ...[2, 3, 4, 5, 6, 7, 8, 9].map((n) => `Inicializar variable ${n}`)];
  return (
    <div className="flex min-h-0 flex-1 bg-[#f8f8f8]">
      <div className="flex h-full min-w-0 flex-1 flex-col items-center overflow-hidden pt-[30px]">
        {steps.map((t, i) => (
          <React.Fragment key={t}>
            {i > 0 && (
              <svg className="shrink-0" width="20" height="40" viewBox="0 0 20 40" fill="none" stroke="#505050" strokeWidth="2"><path d="M10 0v38M1 28.500l9 10 9-10" /></svg>
            )}
            <div className="shrink-0"><StepCard title={t} trigger={i === 0} /></div>
          </React.Fragment>
        ))}
      </div>
      <div className="flex w-4 flex-col items-center bg-[#f0f0f0] text-[8px] leading-[17px] text-[#777]">
        ▲
        <span className="h-[448px] w-[13px] bg-[#c1c1c1]" />
        <span className="mt-auto text-black">▼</span>
      </div>
    </div>
  );
}

function RightScreen() {
  return (
    <section className="flex h-screen min-w-0 flex-col bg-[#f3f3f3]">
      <EdgeBrowserBar />
      <header className="grid h-12 grid-cols-[629px_468px_1fr] items-center bg-[#ef332b] text-white">
        <div className="flex items-center gap-[25px] pl-4">
          <Waffle />
          <span className="text-[14px] font-bold">Power Automate</span>
        </div>
        <label className="flex h-8 items-center gap-2.5 rounded bg-[#fafafa] pl-4 text-[#0f6cbd] shadow">
          <Search className="h-[18px] w-[18px] -scale-x-100" strokeWidth={1.4} />
          <input aria-label="Buscar" placeholder="Buscar" className="min-w-0 flex-1 bg-transparent text-[13px] text-[#555] outline-none placeholder:text-[#555]" />
        </label>
        <div className="flex items-center justify-end pr-2">
          <svg width="16" height="18" viewBox="0 0 16 18" fill="none" stroke="#fff" strokeWidth="1.100"><circle cx="8" cy="7" r="6" /><path d="M2 7h12M8 1v12M8 1c-4 4-4 8 0 12M8 1c4 4 4 8 0 12M1.500 13L.6 17h14.800l-.9-4" /></svg>
          <div className="ml-4 w-[160px] leading-4 whitespace-nowrap">
            <div className="text-[10px]">Entornos</div>
            <div className="text-[13px]">Banco Atlantida S.A. (de...</div>
          </div>
          <Settings className="ml-[38px] h-[18px] w-[18px]" strokeWidth={1.4} />
          <span className="ml-[34px] text-[20px]">?</span>
          <span className="ml-7 flex h-8 w-8 items-center justify-center rounded-full border border-white text-[13px]">C</span>
        </div>
      </header>
      <div className="flex min-h-0 flex-1">
        <Sidebar />
        <main className="flex min-w-0 flex-1 flex-col">
          <div className="flex h-10 items-center pr-8 pl-[31px] text-[13px] text-[#222]">
            <ArrowLeft className="h-[18px] w-[18px] text-[#3b6cf6]" strokeWidth={1.4} />
            <h2 className="ml-4">SendPDF • Se ha ejecutado a las 19/7/2023 15:28:11</h2>
            <div className="ml-auto flex gap-4">
              <button className="flex items-center gap-2"><svg width="17" height="17" viewBox="0 0 17 17" fill="none" stroke="#3b6cf6" strokeWidth="1.200"><path d="M6.500 15.500a7.200 7.200 0 0 1-2-13M1.500 2h3.500v3.500M10.500 1.500a7.200 7.200 0 0 1 0 14" /></svg>Reenviar</button>
              <button disabled className="flex items-center gap-2 text-[#a6a6a6]"><GlyphX />Cancelar</button>
              <button className="flex items-center gap-2"><Pencil className="h-4 w-4 text-[#3b6cf6]" strokeWidth={1.5} />Editar</button>
            </div>
          </div>
          <div role="status" className="flex h-8 items-center bg-[#dff6dd] pr-6 pl-7 text-[11px] text-[#222]">
            <svg width="17" height="17" viewBox="0 0 17 17" fill="none" stroke="#107c10"><circle cx="8.500" cy="8.500" r="7.500" /><path d="M5 8.800l2.500 2.500L12 6.500" /></svg>
            <span className="ml-2">El flujo se ejecutó correctamente.</span>
            <button aria-label="Cerrar mensaje" className="ml-auto text-[#666]"><GlyphX /></button>
          </div>
          <FlowCanvas />
        </main>
      </div>
      <footer className="grid h-12 shrink-0 grid-cols-[549px_1fr_auto] items-center bg-[#202020] text-white">
        <Weather />
        <TaskApps />
        <span className="pr-[18px] text-right text-[11px] leading-4">15:44<br />19/7/2023</span>
      </footer>
    </section>
  );
}

export default function App() {
  return (
    <div className={`grid min-h-screen grid-cols-[1366fr_1920fr] bg-black ${ui}`}>
      <LeftScreen />
      <RightScreen />
    </div>
  );
}
